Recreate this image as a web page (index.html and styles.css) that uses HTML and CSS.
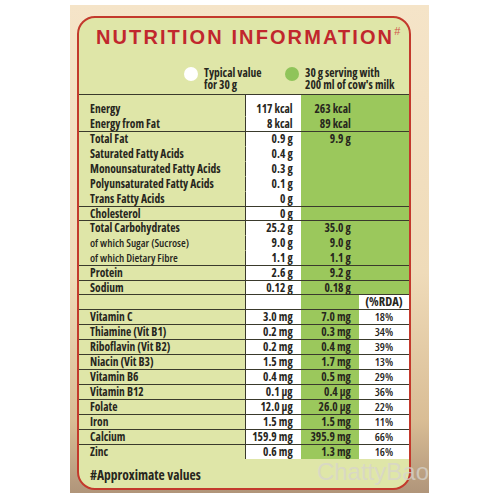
FILE: index.html
```html
<!DOCTYPE html>
<html lang="en">
<head>
    <meta charset="UTF-8">
    <title>Nutrition Information</title>
    <link rel="stylesheet" href="styles.css">
</head>
<body>
    <div class="pack">
        <div class="card">
            <h1 class="title">NUTRITION INFORMATION<sup>#</sup></h1>

            <div class="legend">
                <div class="legend-item item-plain">
                    <span class="dot dot-white"></span>
                    <span>Typical value<br>for 30&#8201;g</span>
                </div>
                <div class="legend-item">
                    <span class="dot dot-green"></span>
                    <span>30&#8201;g serving with<br>200 ml of cow's milk</span>
                </div>
            </div>

            <table class="facts">
                <colgroup>
                    <col class="c-label">
                    <col class="c-plain">
                    <col class="c-milk">
                    <col class="c-rda">
                </colgroup>
                <tbody class="top">
                    <tr class="group first"><td>Energy</td><td>117 kcal</td><td>263 kcal</td><td></td></tr>
                    <tr><td>Energy from Fat</td><td>8 kcal</td><td>89 kcal</td><td></td></tr>
                    <tr class="group"><td>Total Fat</td><td>0.9 g</td><td>9.9 g</td><td></td></tr>
                    <tr class="sub"><td>Saturated Fatty Acids</td><td>0.4 g</td><td></td><td></td></tr>
                    <tr class="sub"><td>Monounsaturated Fatty Acids</td><td>0.3 g</td><td></td><td></td></tr>
                    <tr class="sub"><td>Polyunsaturated Fatty Acids</td><td>0.1 g</td><td></td><td></td></tr>
                    <tr class="sub"><td>Trans Fatty Acids</td><td>0 g</td><td></td><td></td></tr>
                    <tr class="group short"><td>Cholesterol</td><td>0 g</td><td></td><td></td></tr>
                    <tr class="group"><td>Total Carbohydrates</td><td>25.2 g</td><td>35.0 g</td><td></td></tr>
                    <tr class="sub small"><td>of which Sugar (Sucrose)</td><td>9.0 g</td><td>9.0 g</td><td></td></tr>
                    <tr class="sub small"><td>of which Dietary Fibre</td><td>1.1 g</td><td>1.1 g</td><td></td></tr>
                    <tr class="group"><td>Protein</td><td>2.6 g</td><td>9.2 g</td><td></td></tr>
                    <tr class="group short"><td>Sodium</td><td>0.12 g</td><td>0.18 g</td><td></td></tr>
                </tbody>
                <tbody class="vits">
                    <tr class="group head"><td></td><td></td><td></td><td>(%RDA)</td></tr>
                    <tr class="group"><td>Vitamin C</td><td>3.0 mg</td><td>7.0 mg</td><td>18%</td></tr>
                    <tr class="group"><td>Thiamine (Vit B1)</td><td>0.2 mg</td><td>0.3 mg</td><td>34%</td></tr>
                    <tr class="group"><td>Riboflavin (Vit B2)</td><td>0.2 mg</td><td>0.4 mg</td><td>39%</td></tr>
                    <tr class="group"><td>Niacin (Vit B3)</td><td>1.5 mg</td><td>1.7 mg</td><td>13%</td></tr>
                    <tr class="group"><td>Vitamin B6</td><td>0.4 mg</td><td>0.5 mg</td><td>29%</td></tr>
                    <tr class="group"><td>Vitamin B12</td><td>0.1 µg</td><td>0.4 µg</td><td>36%</td></tr>
                    <tr class="group"><td>Folate</td><td>12.0 µg</td><td>26.0 µg</td><td>22%</td></tr>
                    <tr class="group"><td>Iron</td><td>1.5 mg</td><td>1.5 mg</td><td>11%</td></tr>
                    <tr class="group"><td>Calcium</td><td>159.9 mg</td><td>395.9 mg</td><td>66%</td></tr>
                    <tr class="group"><td>Zinc</td><td>0.6 mg</td><td>1.3 mg</td><td>16%</td></tr>
                </tbody>
            </table>

            <p class="note">#Approximate values</p>
        </div>
        <div class="watermark">ChattyBao</div>
    </div>
</body>
</html>
```

FILE: styles.css
```css
* {
    margin: 0;
    padding: 0;
    box-sizing: border-box;
}

body {
    background: #fff;
    font-family: "Open Sans", "DejaVu Sans Condensed", sans-serif;
    font-stretch: 85%;
    color: #27261d;
}

.pack {
    position: relative;
    width: 359px;
    height: 488px;
    margin: 5px 0 0 70px;
    padding: 11px 18px 3px 7px;
    background: linear-gradient(to bottom, #f5e4c8 0%, #efdbb9 55%, #d9bd95 85%, #b0957a 100%);
}

.card {
    height: 100%;
    border: 2.5px solid #c3392c;
    border-radius: 18px;
    background: #dfe6a8;
    overflow: hidden;
}

.title {
    height: 26px;
    padding: 13px 0 0 17px;
    font-family: "Liberation Sans", Arial, sans-serif;
    font-stretch: normal;
    font-size: 20px;
    font-weight: bold;
    line-height: 13px;
    color: #c1272d;
    letter-spacing: 2.1px;
    white-space: nowrap;
}

.title sup {
    font-size: 11px;
    font-weight: normal;
    line-height: 0;
    vertical-align: 9px;
    margin-left: 0;
    letter-spacing: 0;
    color: #d0544a;
}

.legend {
    display: flex;
    gap: 11px;
    padding: 23px 0 0 105px;
    height: 49.5px;
    font-size: 11.5px;
    font-weight: bold;
    line-height: 12px;
    white-space: nowrap;
}

.legend-item {
    display: flex;
    align-items: flex-start;
    gap: 6px;
}

.item-plain {
    width: 90px;
}

.dot {
    flex: none;
    width: 14px;
    height: 14px;
    border-radius: 50%;
}

.dot-white { background: #fff; }
.dot-green { background: #8fc45a; }

.facts {
    width: 100%;
    table-layout: fixed;
    border-collapse: separate;
    border-spacing: 0;
    font-size: 11.5px;
    font-weight: bold;
}

.c-label { width: 166px; }
.c-plain { width: 55px; }
.c-milk { width: 58px; }
.c-rda { width: 50px; }

.facts td {
    line-height: 14px;
    padding: 0;
    border-top: 1px solid transparent;
    white-space: nowrap;
}

.facts .group td {
    border-top-color: #3a3a2c;
}

.facts .short td {
    line-height: 13px;
}

.facts .first td {
    padding-top: 7px;
}

.facts td:nth-child(1) {
    padding-left: 11px;
    border-right: 1px solid #3a3a2c;
}

.facts .small td:nth-child(1) {
    font-size: 11px;
    font-weight: 600;
}

.facts td:nth-child(2) {
    background: #fff;
    text-align: right;
    padding-right: 8px;
}

.facts td:nth-child(3) {
    background: #9bc85c;
    text-align: right;
    padding-right: 8px;
}

.facts .top td:nth-child(4) {
    background: #9bc85c;
}

.facts .vits td:nth-child(4) {
    background: #fff;
    text-align: center;
    font-weight: 600;
}

.facts .head td:nth-child(4) {
    font-size: 12.5px;
    font-weight: bold;
}

.note {
    padding: 7px 0 0 11px;
    font-size: 13.5px;
    font-weight: bold;
}

.watermark {
    position: absolute;
    right: 0;
    bottom: 11px;
    font-family: "Liberation Sans", Arial, sans-serif;
    font-stretch: normal;
    font-size: 24px;
    line-height: 20px;
    color: rgba(215, 212, 205, 0.75);
}
```
